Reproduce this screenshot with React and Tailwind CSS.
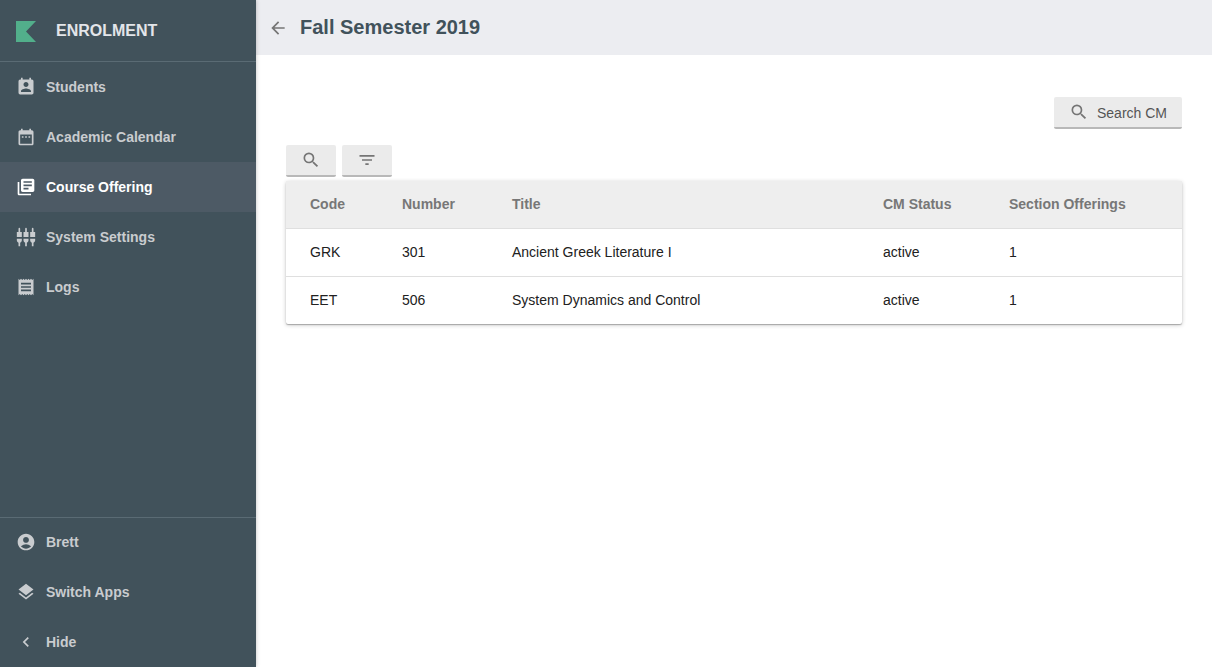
import React from "react";
import {
  MdPermContactCalendar,
  MdDateRange,
  MdLibraryBooks,
  MdSettingsInputComponent,
  MdReceipt,
  MdAccountCircle,
  MdLayers,
  MdKeyboardArrowLeft,
  MdArrowBack,
  MdSearch,
  MdFilterList,
} from "react-icons/md";

const mainNav = [
  { label: "Students", icon: MdPermContactCalendar },
  { label: "Academic Calendar", icon: MdDateRange },
  { label: "Course Offering", icon: MdLibraryBooks, active: true },
  { label: "System Settings", icon: MdSettingsInputComponent },
  { label: "Logs", icon: MdReceipt },
];

const footerNav = [
  { label: "Brett", icon: MdAccountCircle },
  { label: "Switch Apps", icon: MdLayers },
  { label: "Hide", icon: MdKeyboardArrowLeft },
];

const courses = [
  { code: "GRK", number: "301", title: "Ancient Greek Literature I", status: "active", sections: "1" },
  { code: "EET", number: "506", title: "System Dynamics and Control", status: "active", sections: "1" },
];

function NavItem({ label, icon: Icon, active }) {
  return (
    <a
      className={
        active
          ? "flex h-[50px] items-center gap-2.5 bg-[#4d5a65] px-4 text-sm font-bold text-white"
          : "flex h-[50px] items-center gap-2.5 px-4 text-sm font-bold text-[#c9cccf]"
      }
    >
      <Icon size={20} />
      <span>{label}</span>
    </a>
  );
}

function Sidebar() {
  return (
    <aside className="z-10 flex w-64 shrink-0 flex-col bg-[#41525b] shadow-[0_0_4px_rgba(0,0,0,0.25)]">
      <div className="flex h-[62px] items-center gap-5 border-b border-[#5a6b74] px-4">
        <svg width="20" height="21" viewBox="0 0 20 21" className="mt-0.5">
          <path d="M0 0H20L10 10.5L20 21H0Z" fill="#52af8b" />
        </svg>
        <span className="text-base font-bold text-[#e3e5e9]">ENROLMENT</span>
      </div>
      <nav className="flex-1">
        {mainNav.map((item) => (
          <NavItem key={item.label} {...item} />
        ))}
      </nav>
      <nav className="shadow-[inset_0_1px_0_#5a6b74]">
        {footerNav.map((item) => (
          <NavItem key={item.label} {...item} />
        ))}
      </nav>
    </aside>
  );
}

function CourseTable() {
  return (
    <table className="w-full table-fixed rounded-xs bg-white text-left text-sm shadow-[0_1px_4px_rgba(0,0,0,0.22),0_1px_1px_rgba(0,0,0,0.25)]">
      <colgroup>
        <col className="w-[92px]" />
        <col className="w-[110px]" />
        <col className="w-[371px]" />
        <col className="w-[126px]" />
        <col />
      </colgroup>
      <thead>
        <tr className="h-[47px] border-b border-[#dfdfdf] bg-[#eeeeee] text-[#777777]">
          <th className="pl-6 font-bold">Code</th>
          <th className="pl-6 font-bold">Number</th>
          <th className="pl-6 font-bold">Title</th>
          <th className="pl-6 font-bold">CM Status</th>
          <th className="pl-6 font-bold">Section Offerings</th>
        </tr>
      </thead>
      <tbody>
        {courses.map((c) => (
          <tr key={c.code} className="h-12 border-b border-[#dfdfdf] text-[#212121] last:border-b-0">
            <td className="pl-6">{c.code}</td>
            <td className="pl-6">{c.number}</td>
            <td className="pl-6">{c.title}</td>
            <td className="pl-6">{c.status}</td>
            <td className="pl-6">{c.sections}</td>
          </tr>
        ))}
      </tbody>
    </table>
  );
}

export default function App() {
  return (
    <div className="flex h-screen w-full overflow-hidden bg-white font-['Liberation_Sans',Arial,sans-serif]">
      <Sidebar />
      <main className="flex flex-1 flex-col">
        <header className="flex h-[55px] items-center gap-3 bg-[#ecedf1] px-3">
          <MdArrowBack size={20} className="text-[#757575]" />
          <h1 className="pb-0.5 text-xl font-bold text-[#41525b]">Fall Semester 2019</h1>
        </header>
        <section className="flex flex-col px-[30px] pt-[42px]">
          <button className="flex h-8 items-center gap-2 self-end rounded-xs border-b-2 border-[#b8b8b8] bg-[#ebebeb] px-[15px] text-sm text-[#555555]">
            <MdSearch size={20} className="text-[#757575]" />
            <span className="pt-0.5">Search CM</span>
          </button>
          <div className="mt-4 flex gap-1.5">
            <button className="flex h-8 w-[50px] items-center justify-center rounded-xs border-b-2 border-[#b8b8b8] bg-[#ebebeb] text-[#757575]">
              <MdSearch size={20} />
            </button>
            <button className="flex h-8 w-[50px] items-center justify-center rounded-xs border-b-2 border-[#b8b8b8] bg-[#ebebeb] text-[#757575]">
              <MdFilterList size={20} />
            </button>
          </div>
          <div className="mt-1">
            <CourseTable />
          </div>
        </section>
      </main>
    </div>
  );
}
